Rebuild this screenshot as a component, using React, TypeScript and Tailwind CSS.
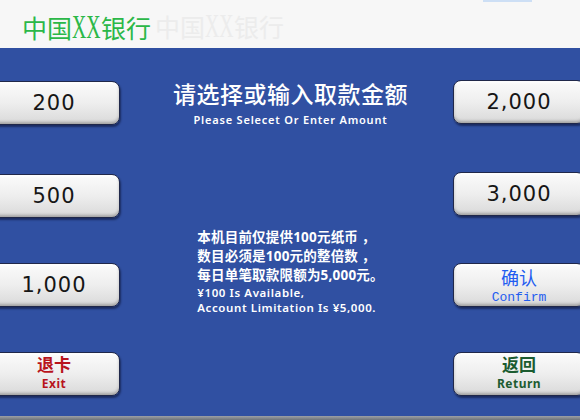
import React from "react";

const sans = { fontFamily: '"Noto Sans", "Noto Sans CJK SC", sans-serif' };

function Key({ side, className = "", children }: { side: "left" | "right"; className?: string; children: React.ReactNode }) {
  return (
    <div
      className={
        "h-[44px] flex flex-col items-center justify-center rounded-[8px] border border-[#20284a] bg-gradient-to-b from-[#fbfbfb] via-[#eeeeee] to-[#d9d9d9] shadow-[inset_0_-2px_3px_rgba(0,0,0,0.25),inset_0_2px_2px_rgba(255,255,255,0.9),1px_2px_2px_rgba(0,0,20,0.45)] " +
        (side === "left" ? "-ml-[12px] w-[132px] " : "w-[132px] ") +
        className
      }
    >
      {children}
    </div>
  );
}

function Amount({ v }: { v: string }) {
  return (
    <span className="text-[21px] tracking-[1px] text-[#161616] leading-none" style={{ fontFamily: '"DejaVu Sans", sans-serif' }}>
      {v}
    </span>
  );
}

function Logo({ color }: { color: string }) {
  return (
    <span className={"whitespace-nowrap " + color} style={{ fontFamily: '"Noto Sans CJK SC", sans-serif' }}>
      中国
      <span className="inline-block w-[29px] text-[33px] leading-[34px] scale-x-[0.6] origin-left whitespace-nowrap" style={{ fontFamily: '"Liberation Serif", serif' }}>XX</span>
      银行
    </span>
  );
}

export default function App() {
  return (
    <div className="w-[580px] h-[420px] flex flex-col overflow-hidden bg-[#f7f7f7]">
      {/* header */}
      <div className="h-[48px] shrink-0 flex items-start bg-[#f7f7f7]">
        <div className="flex items-center pl-[22px] pt-[9px] text-[25px] leading-[34px]">
          <Logo color="text-[#2bb848]" />
          <span className="ml-[4px]"><Logo color="text-[#ececec]" /></span>
        </div>
        <div className="ml-auto mr-[48px] w-[49px] h-[2px] bg-[#cddff5]" />
      </div>

      {/* main */}
      <div className="flex-1 flex bg-[#3050a2]">
        <div className="w-[120px] shrink-0 flex flex-col">
          <Key side="left" className="mt-[33px]"><Amount v="200" /></Key>
          <Key side="left" className="mt-[49px]"><Amount v="500" /></Key>
          <Key side="left" className="mt-[45px]"><Amount v="1,000" /></Key>
          <Key side="left" className="mt-[45px] pb-[4px]">
            <span className="text-[17px] font-bold leading-[24px] text-[#b8141c]" style={sans}>退卡</span>
            <span className="text-[12px] font-bold leading-[14px] tracking-[0.5px] text-[#b8141c]" style={sans}>Exit</span>
          </Key>
        </div>

        <div className="flex-1 flex flex-col items-center pl-[8px] text-white" style={sans}>
          <div className="mt-[31px] text-[23px] font-medium leading-[30px] tracking-[0.5px]">请选择或输入取款金额</div>
          <div className="mt-[4px] text-[11px] font-semibold tracking-[0.8px] leading-[14px]">Please Selecet Or Enter Amount</div>
          <div className="mt-[101px] text-left">
            <div className="text-[13.5px] font-bold leading-[19px] tracking-[0.2px]">本机目前仅提供100元纸币 ，</div>
            <div className="text-[13.5px] font-bold leading-[19px] tracking-[0.2px]">数目必须是100元的整倍数 ，</div>
            <div className="text-[13.5px] font-bold leading-[19px] tracking-[0.2px]">每日单笔取款限额为5,000元。</div>
            <div className="text-[11.5px] font-semibold leading-[15px] tracking-[0.6px]">¥100 Is Available,</div>
            <div className="text-[11.5px] font-semibold leading-[15px] tracking-[0.6px]">Account Limitation Is ¥5,000.</div>
          </div>
        </div>

        <div className="w-[127px] shrink-0 flex flex-col">
          <Key side="right" className="mt-[32px]"><Amount v="2,000" /></Key>
          <Key side="right" className="mt-[48px]"><Amount v="3,000" /></Key>
          <Key side="right" className="mt-[47px]">
            <span className="text-[18px] leading-[24px] text-[#1f5cf0]" style={sans}>确认</span>
            <span className="text-[13px] leading-[15px] text-[#1f5cf0]" style={{ fontFamily: '"Liberation Mono", monospace' }}>Confirm</span>
          </Key>
          <Key side="right" className="mt-[45px] pb-[4px]">
            <span className="text-[17px] font-bold leading-[24px] text-[#1c5c30]" style={sans}>返回</span>
            <span className="text-[12px] font-bold leading-[14px] tracking-[0.5px] text-[#1c5c30]" style={sans}>Return</span>
          </Key>
        </div>
      </div>

      <div className="h-[4px] shrink-0 bg-gradient-to-b from-[#9ca0a6] to-[#6f747a]" />
    </div>
  );
}
